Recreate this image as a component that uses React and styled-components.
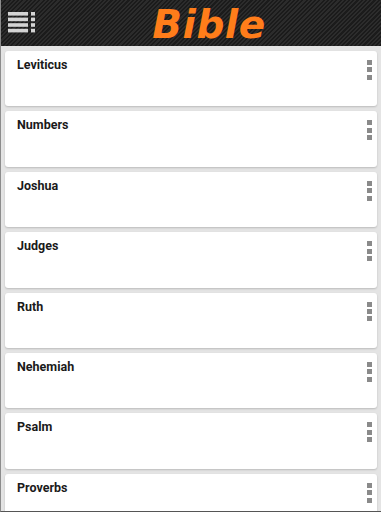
import React from "react";
import styled, { createGlobalStyle } from "styled-components";

const books = ["Leviticus", "Numbers", "Joshua", "Judges", "Ruth", "Nehemiah", "Psalm", "Proverbs"];

const GlobalStyle = createGlobalStyle`
  html, body {
    margin: 0;
    padding: 0;
    background: #e4e4e4;
  }
  body {
    font-family: Roboto, "Liberation Sans", sans-serif;
  }
`;

export default function App() {
  return (
    <>
      <GlobalStyle />
      <Screen>
        <Header>
          <MenuButton aria-label="menu">
            <svg width="28" height="24" viewBox="0 0 28 24">
              {[0, 1, 2, 3].map((i) => (
                <g key={i} fill="#d4d4d4">
                  <rect x="0" y={2 + i * 5.6} width="20" height="3.6" />
                  <rect x="23" y={2 + i * 5.6} width="4" height="3.6" />
                </g>
              ))}
            </svg>
          </MenuButton>
          <Title>Bible</Title>
        </Header>
        <List>
          {books.map((b) => (
            <Card key={b}>
              <BookName>{b}</BookName>
              <Dots>
                <Dot />
                <Dot />
                <Dot />
              </Dots>
            </Card>
          ))}
        </List>
      </Screen>
    </>
  );
}

const Screen = styled.div`
  height: 512px;
  overflow: hidden;
  border-left: 1px solid #8c8c8c;
  border-bottom: 1px solid #555;
  box-sizing: border-box;
  background: #e4e4e4;
`;

const Header = styled.div`
  position: relative;
  height: 46px;
  box-sizing: border-box;
  padding-top: 3px;
  display: flex;
  align-items: center;
  justify-content: center;
  background: repeating-linear-gradient(-45deg, #1b1b1b 0px, #1b1b1b 1.5px, #2c2c2c 1.5px, #2c2c2c 3px);
`;

const MenuButton = styled.div`
  position: absolute;
  left: 7px;
  top: 10px;
  width: 28px;
  height: 24px;
`;

const Title = styled.h1`
  margin: 0 0 0 36px;
  font-family: "DejaVu Sans", sans-serif;
  font-weight: bold;
  font-style: italic;
  font-size: 39px;
  color: #ff7d1a;
  line-height: 1;
  letter-spacing: 0.5px;
`;

const List = styled.div`
  display: flex;
  flex-direction: column;
  gap: 5px;
  padding: 5px 4px 0 4px;
`;

const Card = styled.div`
  flex: none;
  height: 55.4px;
  box-sizing: border-box;
  display: flex;
  justify-content: space-between;
  align-items: flex-start;
  padding: 6px 5px 0 12px;
  background: #fff;
  border-radius: 3px;
  box-shadow: 0 1px 2px rgba(0, 0, 0, 0.18);
`;

const BookName = styled.span`
  font-size: 12.5px;
  font-weight: bold;
  color: #1a1a1a;
`;

const Dots = styled.div`
  display: flex;
  flex-direction: column;
  gap: 2.4px;
  margin-top: 3px;
`;

const Dot = styled.span`
  display: block;
  width: 5px;
  height: 5px;
  background: #8a8a8a;
`;
